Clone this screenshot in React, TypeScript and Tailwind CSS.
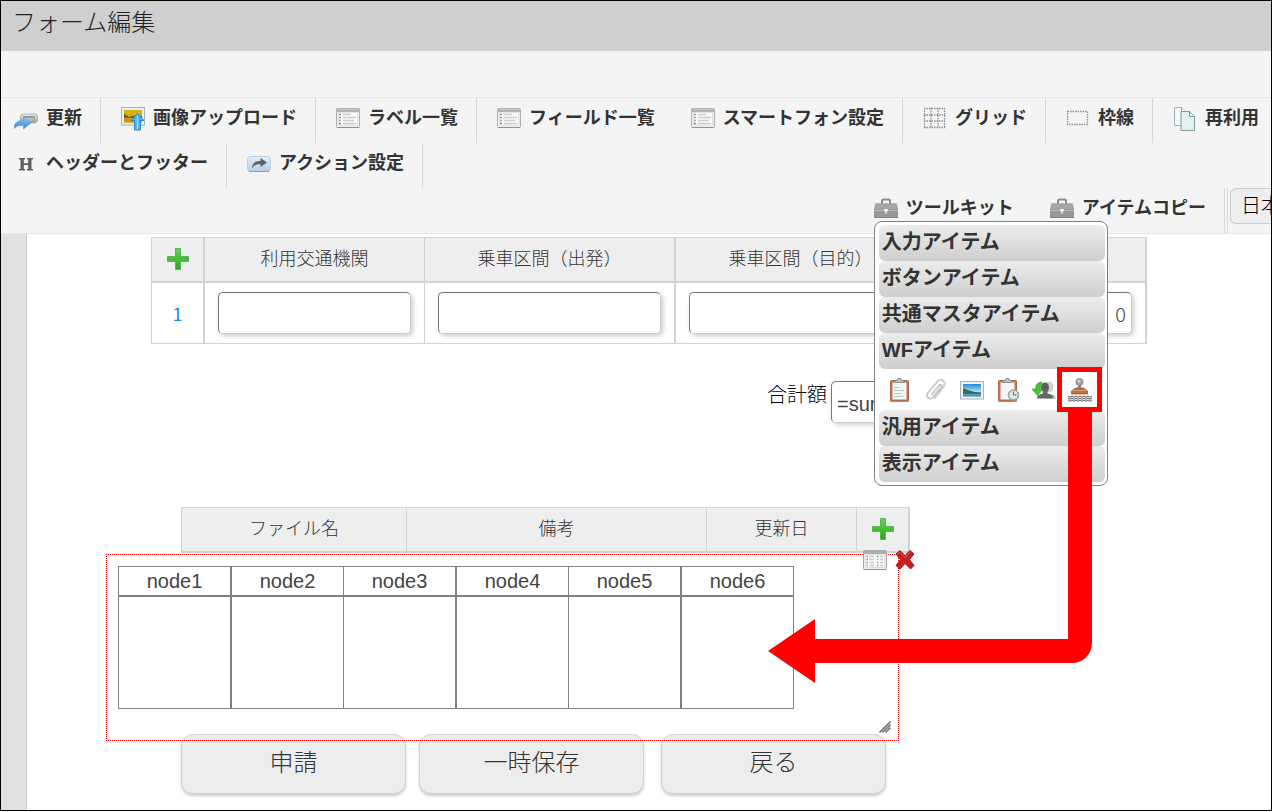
import React from 'react';

const UpdateIcon = () => (
    <svg width="24" height="24" viewBox="0 0 24 24" aria-hidden="true">
        <defs>
            <linearGradient id="drive" x1="0" y1="0" x2="0" y2="1">
                <stop offset="0" stopColor="#ececec"/>
                <stop offset="1" stopColor="#989898"/>
            </linearGradient>
            <linearGradient id="swoosh" x1="0" y1="0" x2="0" y2="1">
                <stop offset="0" stopColor="#8cc8f4"/>
                <stop offset="1" stopColor="#3388d2"/>
            </linearGradient>
        </defs>
        <rect x="6.5" y="7" width="17" height="9" rx="3" fill="url(#drive)" stroke="#b0b0b0"/>
        <rect x="9" y="9" width="12" height="2" rx="1" fill="#999"/>
        <circle cx="20.500" cy="13" r="1.200" fill="#6fe03c"/>
        <path d="M0 21.500C0 16 3.500 13.300 9.500 13.300V10L17 16L9.500 22V18.500C5 18 2.500 19 0 21.500Z" fill="url(#swoosh)" stroke="#5a9fd8" strokeWidth="0.6"/>
    </svg>
);

const UploadIcon = () => (
    <svg width="24" height="24" viewBox="0 0 24 24" aria-hidden="true">
        <rect x="0.5" y="0.5" width="23" height="17.500" fill="#e9f0f1" stroke="#a3b4b8"/>
        <rect x="3" y="3" width="18" height="12.500" fill="#d9b012"/>
        <path d="M3 7L8 10L14 8.500L21 9V11.500L12 11L3 10.500Z" fill="#5d4e10"/>
        <path d="M3 11L10 12L14 15.500H3Z" fill="#c79a10"/>
        <path d="M16.500 6.500L23 13.500H19.500V23H13.500V13.500H10Z" fill="#4fb0f2" stroke="#2f86c9"/>
        <path d="M16.500 8.500V22" stroke="#9cd7fb" strokeWidth="1.500"/>
    </svg>
);

const ListIcon = () => (
    <svg width="24" height="24" viewBox="0 0 24 24" aria-hidden="true">
        <rect x="0.5" y="1.500" width="23" height="19" rx="1" fill="#ededed" stroke="#b0b0b0"/>
        <rect x="1" y="1" width="22" height="4" rx="1" fill="#b2b2b2"/>
        <path d="M2 2.500H22" stroke="#c9c9c9"/>
        <rect x="2.500" y="5.500" width="19" height="12.500" fill="#fafafa" stroke="#e2e2e2"/>
        <path d="M3 7.500H5" stroke="#58c44b" strokeWidth="1.500"/>
        <path d="M3 10.500H5" stroke="#e08a8a" strokeWidth="1.500"/>
        <path d="M3 13.500H5" stroke="#8bacf2" strokeWidth="1.500"/>
        <path d="M3 16.500H5" stroke="#888" strokeWidth="1.500"/>
        <path d="M7 7.500H15M7 10.500H20M7 13.500H18M7 16.500H20" stroke="#cdcdcd" strokeWidth="1.500"/>
        <path d="M1 20.500H23" stroke="#8f8f8f"/>
    </svg>
);

const GridIcon = () => (
    <svg width="24" height="24" viewBox="0 0 24 24" aria-hidden="true">
        <path d="M1 1.500H22M1 8H22M1 14H22M1 20.500H22M1.500 1V21M8 1V21M15 1V21M21.500 1V21" stroke="#909090" strokeWidth="1.300" strokeDasharray="1.500 1" fill="none"/>
    </svg>
);

const BorderIcon = () => (
    <svg width="24" height="24" viewBox="0 0 24 24" aria-hidden="true">
        <rect x="1.500" y="4.500" width="20" height="13" stroke="#909090" strokeWidth="1.300" strokeDasharray="1.500 1" fill="none"/>
    </svg>
);

const ReuseIcon = () => (
    <svg width="24" height="24" viewBox="0 0 24 24" aria-hidden="true">
        <path d="M1.500 0.500H8.500L13 5V18.500H1.500Z" fill="#f3f8f8" stroke="#9cb2b4"/>
        <path d="M8.500 0.500V5H13" fill="#fff" stroke="#7f9b9e"/>
        <path d="M8 4.500H16.500L21.500 9.500V23.500H8Z" fill="#e4f1f1" stroke="#7f9b9e"/>
        <path d="M16.500 4.500V9.500H21.500Z" fill="#fff" stroke="#7f9b9e"/>
    </svg>
);

const HeadingIcon = () => (
    <svg width="24" height="24" viewBox="0 0 24 24" aria-hidden="true">
        <path d="M5 6H11V7.500H9.800V11.300H14.200V7.500H13V6H19V7.500H17.500V17H19V18.500H13V17H14.200V13H9.800V17H11V18.500H5V17H6.500V7.500H5Z" fill="#606060"/>
    </svg>
);

const ActionIcon = () => (
    <svg width="24" height="24" viewBox="0 0 24 24" aria-hidden="true">
        <defs>
            <linearGradient id="panel" x1="0" y1="0" x2="0" y2="1">
                <stop offset="0" stopColor="#e4f0f8"/>
                <stop offset="1" stopColor="#b3cfe6"/>
            </linearGradient>
        </defs>
        <rect x="0.5" y="4.500" width="23" height="15" rx="3" fill="url(#panel)" stroke="#b7d0e5"/>
        <path d="M2 19.500H22" stroke="#7da2c4"/>
        <path d="M5 16.500C5 11 8 9 13.500 9V6L20 10.500L13.500 15V12.200C9.500 12 7 13 5 16.500Z" fill="#606060"/>
    </svg>
);

const ToolboxIcon = () => (
    <svg width="24" height="24" viewBox="0 0 24 24" aria-hidden="true">
        <path d="M8 7V4.500C8 3 8.500 2.500 9.500 2.500H14.500C15.500 2.500 16 3 16 4.500V7" fill="none" stroke="#8c8c8c" strokeWidth="2"/>
        <path d="M1.500 6.500H22.500L24 12V21H0V12Z" fill="#999"/>
        <path d="M1.500 6.500H22.500L23.500 12H0.500Z" fill="#a6a6a6"/>
        <path d="M0 13.500H24" stroke="#bdbdbd"/>
        <path d="M0 20.500H24" stroke="#828282"/>
        <path d="M9.500 11.500H14.500V14L13 15V17.500H11V15L9.500 14Z" fill="#eee" stroke="#8c8c8c" strokeWidth="0.6"/>
    </svg>
);

const ClipboardIcon = ({ clock = false }: { clock?: boolean }) => (
    <svg width="24" height="24" viewBox="0 0 24 24" aria-hidden="true">
        <rect x="2.500" y="2.500" width="18" height="20.500" rx="1" fill="#bf7a50" stroke="#a8694a"/>
        <path d="M2 23.500H21" stroke="#8d8d8d" strokeWidth="0.8"/>
        <rect x="4.500" y="4.500" width="14" height="17" fill="#f3f6f5"/>
        <path d="M7 4.500V2.500H9.500L10 0.500H13L13.500 2.500H16V4.500Z" fill="#c2c5c4" stroke="#7e8281" strokeWidth="0.8"/>
        {!clock && <path d="M6 9.500H12M6 12.500H16M6 15.500H13M6 18.500H15" stroke="#b9cbc6"/>}
        {clock && (
            <g>
                <circle cx="17.500" cy="17" r="5" fill="#e2e7e9" stroke="#9aa3a6" strokeWidth="1.500"/>
                <path d="M17.500 13.500V17H20.500" fill="none" stroke="#5f696c"/>
            </g>
        )}
    </svg>
);

const ClipIcon = () => (
    <svg width="24" height="24" viewBox="0 0 24 24" aria-hidden="true">
        <g fill="none" transform="translate(0 1)">
            <path d="M7 16L15 6.500C16.500 5 18.500 6 17.300 8L9 18C6.500 21.500 1 18.500 3.500 14.500L13.500 2.500C16.500 -1 22.500 2 20 7L10.500 19.500" stroke="#b5b5b5" strokeWidth="1.800"/>
            <path d="M7 16L15 6.500C16.500 5 18.500 6 17.300 8L9 18C6.500 21.500 1 18.500 3.500 14.500L13.500 2.500C16.500 -1 22.500 2 20 7L10.500 19.500" stroke="#ededed" strokeWidth="0.7"/>
        </g>
    </svg>
);

const PictureIcon = () => (
    <svg width="24" height="24" viewBox="0 0 24 24" aria-hidden="true">
        <defs>
            <linearGradient id="sky" x1="0" y1="0" x2="0" y2="1">
                <stop offset="0" stopColor="#2b86d4"/>
                <stop offset="0.6" stopColor="#a9dff5"/>
                <stop offset="1" stopColor="#2b78b4"/>
            </linearGradient>
        </defs>
        <rect x="0.5" y="3.500" width="23" height="17.500" fill="#eef3f4" stroke="#a3b4b8"/>
        <rect x="3" y="6" width="18" height="12.500" fill="url(#sky)"/>
        <path d="M3 10.500C6 10.500 10 14 21 14.500V16H3Z" fill="#3b6a5e"/>
    </svg>
);

const UsersIcon = () => (
    <svg width="24" height="24" viewBox="0 0 24 24" aria-hidden="true">
        <ellipse cx="17" cy="9" rx="4" ry="5" fill="#d2d2d2" stroke="#b5b5b5" strokeWidth="0.6"/>
        <path d="M13 20.500C13 16 23 14 24 20.500Z" fill="#bcbcbc"/>
        <ellipse cx="13" cy="9.500" rx="4" ry="5" fill="#5e5e5e"/>
        <path d="M5 20.500C5 17 8 16 11 15.500V12H15.500V15.500C18.500 16 21 17 21 20.500Z" fill="#666"/>
        <path d="M10 4C5.500 4 3.500 7 3.500 11H0L5.500 17.500L11 11H8.500C8.500 9 8.500 7.500 10 6.500Z" fill="#44c632" stroke="#2c9f20" strokeWidth="0.6"/>
    </svg>
);

const StampIcon = () => (
    <svg width="24" height="24" viewBox="0 0 24 24" aria-hidden="true">
        <circle cx="11.500" cy="4" r="3.600" fill="#a2a2a2" stroke="#858585" strokeWidth="0.8"/>
        <circle cx="11" cy="3.300" r="1.500" fill="#d6d6d6"/>
        <path d="M10 7H13V11H10Z" fill="#8a8a8a"/>
        <path d="M7.500 10H15.500L19.500 13V16H3.500V13Z" fill="#bd713f" stroke="#96592f" strokeWidth="0.8"/>
        <path d="M5 12.500H18" stroke="#dc9c6a"/>
        <path d="M0 18L2 19.300L4 18L6 19.300L8 18L10 19.300L12 18L14 19.300L16 18L18 19.300L20 18L22 19.300L24 18M0 20L2 21.300L4 20L6 21.300L8 20L10 21.300L12 20L14 21.300L16 20L18 21.300L20 20L22 21.300L24 20M0 22L2 23.300L4 22L6 23.300L8 22L10 23.300L12 22L14 23.300L16 22L18 23.300L20 22L22 23.300L24 22" fill="none" stroke="#444" strokeWidth="0.9"/>
    </svg>
);

const PlusIcon = () => (
    <svg width="24" height="24" viewBox="0 0 24 24" aria-hidden="true">
        <defs>
            <linearGradient id="plus" x1="0" y1="0" x2="0" y2="1">
                <stop offset="0" stopColor="#63d452"/>
                <stop offset="1" stopColor="#2aa81b"/>
            </linearGradient>
        </defs>
        <path d="M9.500 1.500H14.500V9.500H22.500V14.500H14.500V22.500H9.500V14.500H1.500V9.500H9.500Z" fill="url(#plus)" stroke="#5fb254" strokeLinejoin="round"/>
    </svg>
);

const TableIcon = () => (
    <svg width="24" height="24" viewBox="0 0 24 24" aria-hidden="true">
        <rect x="0.5" y="2.500" width="23" height="19" rx="1" fill="#efefef" stroke="#a3a3a3"/>
        <rect x="1" y="2" width="22" height="4" rx="1" fill="#adadad"/>
        <rect x="2.500" y="7" width="19" height="12.500" fill="#fafafa" stroke="#dedede"/>
        <path d="M3.500 8.500H5M14 14.500H15.500" stroke="#6ac95d" strokeWidth="1.500"/>
        <path d="M3.500 11.500H5M14 17.500H15.500" stroke="#d77" strokeWidth="1.500"/>
        <path d="M3.500 14.500H5M14 8.500H15.500" stroke="#6a98ee" strokeWidth="1.500"/>
        <path d="M3.500 17.500H5M14 11.500H15.500" stroke="#e8a34e" strokeWidth="1.500"/>
        <path d="M6.500 8.500H11M6.500 11.500H11M6.500 14.500H11M6.500 17.500H11M17 8.500H20M17 11.500H20M17 14.500H20M17 17.500H20" stroke="#cacaca" strokeWidth="1.500"/>
        <path d="M1 21.500H23" stroke="#8f8f8f"/>
    </svg>
);

const DeleteIcon = () => (
    <svg width="24" height="24" viewBox="0 0 24 24" aria-hidden="true">
        <path d="M3 6L7 2.500L12 7.500L17 2.500L21 6L16.500 11.500L21 17.500L17.500 21L12 15.500L7 21L3 17.500L7.500 11.500Z" fill="#c42222" stroke="#9c2020" strokeLinejoin="round"/>
        <path d="M5 6L7 4.500L12 9.500L17 4.500" fill="none" stroke="#dd6060"/>
    </svg>
);

const menu = [
    { icon: <UpdateIcon/>, title: "更新", cls: "pl-[13px] pr-[18px] border-r" },
    { icon: <UploadIcon/>, title: "画像アップロード", cls: "pl-5 pr-[18px] border-r" },
    { icon: <ListIcon/>, title: "ラベル一覧", cls: "pl-5 pr-[18px] border-r" },
    { icon: <ListIcon/>, title: "フィールド一覧", cls: "pl-5 pr-[18px]" },
    { icon: <ListIcon/>, title: "スマートフォン設定", cls: "pl-[18px] pr-[18px] border-r" },
    { icon: <GridIcon/>, title: "グリッド", cls: "pl-5 pr-[18px] border-r" },
    { icon: <BorderIcon/>, title: "枠線", cls: "pl-5 pr-[18px] border-r" },
    { icon: <ReuseIcon/>, title: "再利用", cls: "pl-5" },
    { icon: <HeadingIcon/>, title: "ヘッダーとフッター", cls: "pl-[13px] pr-[18px] border-r" },
    { icon: <ActionIcon/>, title: "アクション設定", cls: "pl-5 pr-[18px] border-r" },
];

const wfItems = [
    { icon: <ClipboardIcon/>, title: "clipboard" },
    { icon: <ClipIcon/>, title: "attachment" },
    { icon: <PictureIcon/>, title: "image" },
    { icon: <ClipboardIcon clock/>, title: "history" },
    { icon: <UsersIcon/>, title: "users" },
];

const nodes = ["node1", "node2", "node3", "node4", "node5", "node6"];

const inputStyle = "block w-full h-[42px] rounded-[5px] border border-t-[#777] border-l-[#777] border-r-[#ccc] border-b-[#ccc] bg-white px-[5px] text-[20px] text-[#444] shadow-[2px_2px_5px_rgba(0,0,0,0.2)] outline-none";

const MenuButton = ({ icon, title }: { icon: React.ReactNode, title: string }) => (
    <button type="button" className="flex items-center gap-2 pb-1 whitespace-nowrap text-[18px] leading-[27px] font-bold text-[#333]">
        {icon}
        <span>{title}</span>
    </button>
);

const ToolGroup = ({ title }: { title: string }) => (
    <button type="button" className="block w-full h-9 rounded-md bg-linear-to-b from-[#ececec] to-[#cfcfcf] pl-[3px] pb-[3px] text-left text-[20px] leading-[30px] font-bold text-[#333]">
        {title}
    </button>
);

const Toolkit = () => (
    <div className="absolute left-0 top-[33px] z-20 w-[234px] rounded-lg border border-[#808080] bg-white py-[3px] pl-1 pr-[2px]">
        <ToolGroup title="入力アイテム"/>
        <ToolGroup title="ボタンアイテム"/>
        <ToolGroup title="共通マスタアイテム"/>
        <ToolGroup title="WFアイテム"/>
        <div className="flex items-center gap-3 h-[41px] pl-[9px]">
            {wfItems.map((item) => (
                <button key={item.title} type="button" aria-label={item.title}>{item.icon}</button>
            ))}
            <div className="relative">
                <button type="button" aria-label="stamp" className="block"><StampIcon/></button>
                <div className="absolute -left-[11px] -top-[11px] size-[45px] border-5 border-[#f00]"></div>
                <svg className="absolute right-0 top-[33px]" width="324" height="272" viewBox="0 0 324 272" aria-hidden="true">
                    <path d="M300 0H324V232A20 20 0 0 1 304 252H47V272L0 240L47 208V228H300Z" fill="#f00"/>
                </svg>
            </div>
        </div>
        <ToolGroup title="汎用アイテム"/>
        <ToolGroup title="表示アイテム"/>
    </div>
);

const Toolbar = () => (
    <nav className="bg-[#f4f4f4] pt-[46px] border-b border-[#e8e8e8]">
        <ul className="flex flex-wrap border-t border-[#e8e8e8]">
            {menu.map((item) => (
                <li key={item.title} className={"flex items-center h-[45px] border-[#d8d8d8] " + item.cls}>
                    <MenuButton icon={item.icon} title={item.title}/>
                </li>
            ))}
        </ul>
        <div className="flex justify-end h-[45px]">
            <div className="relative flex items-center pr-9">
                <MenuButton icon={<ToolboxIcon/>} title="ツールキット"/>
                <Toolkit/>
            </div>
            <div className="flex items-center pr-[18px] border-r border-[#d8d8d8]">
                <MenuButton icon={<ToolboxIcon/>} title="アイテムコピー"/>
            </div>
            <div className="ml-[2px] pl-[2px] border-l border-[#d8d8d8]">
                <select aria-label="言語" className="block w-[41px] h-9 appearance-none rounded-l-md border border-r-0 border-[#ccc] bg-[#eee] pl-[10px] text-[20px] font-light text-black">
                    <option>日本語</option>
                </select>
            </div>
        </div>
    </nav>
);

const RouteTable = () => (
    <table className="ml-[124px] mt-[3px] w-[996px] table-fixed border-separate border-spacing-0 border-t border-l border-[#d3d3d3] text-[18px] text-[#333]">
        <thead>
            <tr className="h-[45px] bg-[#eee] *:border-[#d3d3d3] *:border-b-2 *:p-0 *:font-light">
                <th className="w-[53px] border-r-2">
                    <button type="button" aria-label="行を追加" className="block mx-auto pb-[2px]"><PlusIcon/></button>
                </th>
                <th className="w-[220px] border-r">利用交通機関</th>
                <th className="w-[251px] border-r-2">乗車区間（出発）</th>
                <th className="w-[250px] border-r">乗車区間（目的）</th>
                <th className="border-r-2">金額</th>
            </tr>
        </thead>
        <tbody>
            <tr className="h-[61px] *:border-[#d3d3d3] *:border-b *:px-[13px] *:py-0">
                <td className="border-r-2 text-center font-['Noto_Sans_CJK_JP',sans-serif] text-[#1b87e0]">1</td>
                <td className="border-r"><input type="text" aria-label="利用交通機関" className={inputStyle}/></td>
                <td className="border-r-2"><input type="text" aria-label="乗車区間（出発）" className={inputStyle}/></td>
                <td className="border-r"><input type="text" aria-label="乗車区間（目的）" className={inputStyle}/></td>
                <td className="border-r-2"><input type="text" aria-label="金額" defaultValue="0" className={inputStyle + " text-right font-['Noto_Sans_CJK_JP',sans-serif] font-light"}/></td>
            </tr>
        </tbody>
    </table>
);

const FileTable = () => (
    <table className="ml-[154px] mt-[84px] w-[729px] table-fixed border-separate border-spacing-0 border-t border-l border-[#d3d3d3] text-[18px] text-[#333]">
        <thead>
            <tr className="h-[45px] bg-[#eee] *:border-[#d3d3d3] *:border-b-2 *:p-0 *:font-light">
                <th className="w-[225px] border-r">ファイル名</th>
                <th className="w-[300px] border-r">備考</th>
                <th className="w-[150px] border-r">更新日</th>
                <th className="border-r-2">
                    <button type="button" aria-label="ファイルを追加" className="block mx-auto pb-[2px]"><PlusIcon/></button>
                </th>
            </tr>
        </thead>
    </table>
);

const StampArea = () => (
    <div className="relative z-10 ml-[79px] mt-px w-[793px] h-[187px] border border-dotted border-[#f00] pl-[11px] pt-[11px]">
        <table className="w-[676px] table-fixed border-separate border-spacing-0 border-t border-l border-[#808080] text-[20px] leading-[28px] text-[#444]">
            <thead>
                <tr>
                    {nodes.map((node) => (
                        <th key={node} className="p-0 odd:w-[113px] even:w-[112px] border-r odd:border-r-2 border-b-2 border-[#808080] font-normal">{node}</th>
                    ))}
                </tr>
            </thead>
            <tbody>
                <tr className="h-[112px]">
                    {nodes.map((node) => (
                        <td key={node} className="p-0 border-r odd:border-r-2 border-b border-[#808080]"></td>
                    ))}
                </tr>
            </tbody>
        </table>
        <div className="absolute -top-[7px] -right-[19px] flex gap-[6px]">
            <button type="button" aria-label="プロパティ"><TableIcon/></button>
            <button type="button" aria-label="削除"><DeleteIcon/></button>
        </div>
        <svg className="absolute right-[7px] bottom-[7px]" width="12" height="12" viewBox="0 0 12 12" aria-hidden="true">
            <path d="M0.500 11.500L11.500 0.500M3.500 11.500L11.500 3.500M6.500 11.500L11.500 6.500" stroke="#777" strokeWidth="1.600" fill="none"/>
        </svg>
    </div>
);

const actions = [
    { title: "申請", cls: "mr-[13px]" },
    { title: "一時保存", cls: "mr-[17px]" },
    { title: "戻る", cls: "" },
];

const App = () => {
    return (
        <div className="h-screen pb-px bg-white font-['Liberation_Sans','Noto_Sans_CJK_JP',sans-serif]">
            <div className="flex flex-col h-full overflow-hidden border border-black">
                <header className="h-[50px] shrink-0 bg-[#cfcfcf] pl-[11px] pt-1">
                    <h1 className="text-[24px] leading-9 font-light text-[#222]">フォーム編集</h1>
                </header>
                <Toolbar/>
                <main className="flex grow">
                    <div className="w-[26px] shrink-0 bg-[#e1e1e1] border-r border-[#ccc]"></div>
                    <div className="grow">
                        <RouteTable/>
                        <div className="flex items-start ml-[740px] mt-[37px]">
                            <label htmlFor="total" className="pr-[4px] text-[20px] leading-[28px] font-light text-black whitespace-nowrap">合計額</label>
                            <div className="w-[200px]">
                                <input id="total" type="text" defaultValue="=sum(金額)" className={inputStyle}/>
                            </div>
                        </div>
                        <FileTable/>
                        <StampArea/>
                        <div className="flex ml-[154px] -mt-[7px]">
                            {
                                actions.map((item) => (
                                    <button key={item.title} type="button"
                                            className={"w-[225px] h-[60px] rounded-xl border border-[#d3d3d3] bg-[#ededed] pb-[2px] text-[24px] font-light text-[#333] shadow-[0_2px_3px_rgba(0,0,0,0.2)] " + item.cls}>
                                        {item.title}
                                    </button>
                                ))
                            }
                        </div>
                    </div>
                </main>
            </div>
        </div>
    );
};

export default App;
